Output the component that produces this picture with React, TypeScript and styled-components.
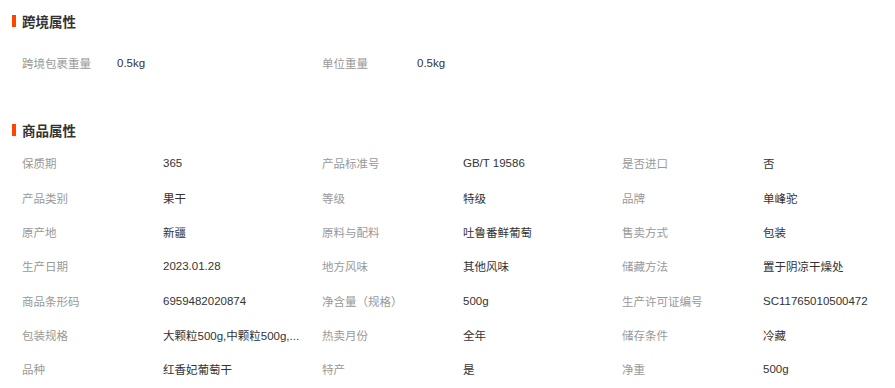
import React from "react";
import styled, { createGlobalStyle } from "styled-components";

const GlobalStyle = createGlobalStyle`
  html, body {
    margin: 0;
    padding: 0;
    background: #fff;
  }
  body {
    font-family: "Liberation Sans", "Noto Sans CJK SC", sans-serif;
    color: #333;
  }
`;

const Page = styled.div`
  width: 895px;
  height: 388px;
  overflow: hidden;
  padding: 11px 0 0 12px;
  box-sizing: border-box;
`;

const Block = styled.section<{ gap: number }>`
  display: flex;
  flex-direction: column;
  gap: ${({ gap }) => gap}px;
  & + & {
    margin-top: 40px;
  }
`;

const Heading = styled.h3`
  display: flex;
  align-items: center;
  gap: 6px;
  margin: 0;
  height: 20px;
  font-size: 13.5px;
  font-weight: 700;
  color: #333;

  &::before {
    content: "";
    width: 4px;
    height: 12px;
    background: #ff4400;
  }
`;

const Table = styled.div<{ labelWidth: number; valueWidth: number }>`
  display: grid;
  grid-template-columns: ${({ labelWidth, valueWidth }) =>
    `${labelWidth}px ${valueWidth}px ${labelWidth}px ${valueWidth}px ${labelWidth}px 1fr`};
  grid-auto-rows: 34.33px;
  padding-left: 10px;
  font-size: 11.5px;
`;

const Label = styled.div`
  display: flex;
  align-items: center;
  color: #999;
  white-space: nowrap;
`;

const Value = styled.div`
  display: flex;
  align-items: center;
  min-width: 0;
  padding-right: 12px;
  color: #333;

  span {
    min-width: 0;
    white-space: nowrap;
    overflow: hidden;
    text-overflow: ellipsis;
  }
`;

type Attr = [string, string];

const crossBorder: Attr[] = [
  ["跨境包裹重量", "0.5kg"],
  ["单位重量", "0.5kg"],
];

const product: Attr[] = [
  ["保质期", "365"],
  ["产品标准号", "GB/T 19586"],
  ["是否进口", "否"],
  ["产品类别", "果干"],
  ["等级", "特级"],
  ["品牌", "单峰驼"],
  ["原产地", "新疆"],
  ["原料与配料", "吐鲁番鲜葡萄"],
  ["售卖方式", "包装"],
  ["生产日期", "2023.01.28"],
  ["地方风味", "其他风味"],
  ["储藏方法", "置于阴凉干燥处"],
  ["商品条形码", "6959482020874"],
  ["净含量（规格）", "500g"],
  ["生产许可证编号", "SC11765010500472"],
  ["包装规格", "大颗粒500g,中颗粒500g,..."],
  ["热卖月份", "全年"],
  ["储存条件", "冷藏"],
  ["品种", "红香妃葡萄干"],
  ["特产", "是"],
  ["净重", "500g"],
];

const AttrTable = ({
  items,
  labelWidth,
  valueWidth,
}: {
  items: Attr[];
  labelWidth: number;
  valueWidth: number;
}) => (
  <Table labelWidth={labelWidth} valueWidth={valueWidth}>
    {items.map(([k, v]) => (
      <React.Fragment key={k}>
        <Label>{k}</Label>
        <Value>
          <span>{v}</span>
        </Value>
      </React.Fragment>
    ))}
  </Table>
);

export default function App() {
  return (
    <>
      <GlobalStyle />
      <Page>
        <Block gap={15}>
          <Heading>跨境属性</Heading>
          <AttrTable items={crossBorder} labelWidth={95} valueWidth={205} />
        </Block>
        <Block gap={6}>
          <Heading>商品属性</Heading>
          <AttrTable items={product} labelWidth={141} valueWidth={159} />
        </Block>
      </Page>
    </>
  );
}
